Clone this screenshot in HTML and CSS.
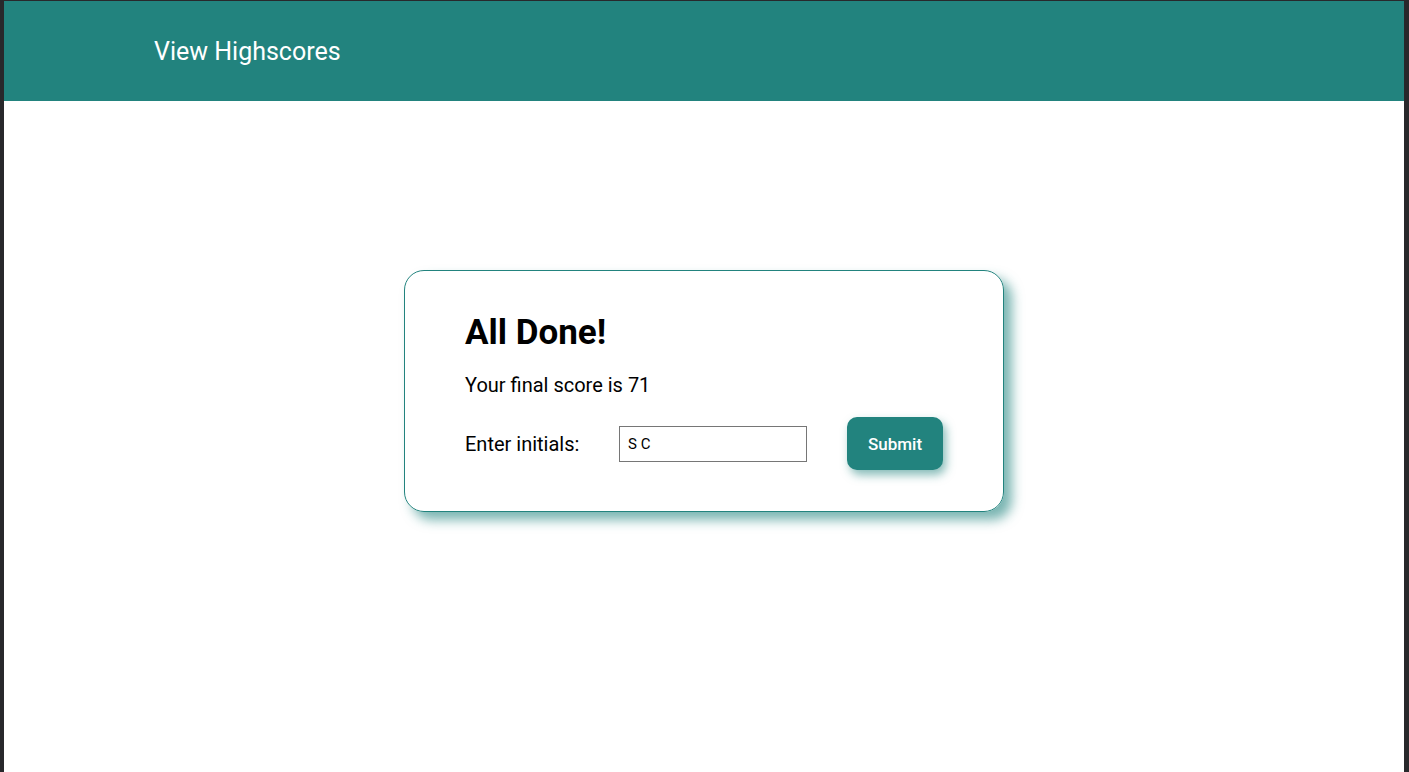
FILE: index.html
```html
<!DOCTYPE html>
<html>
<head>
<meta charset="utf-8">
<link rel="stylesheet" href="styles.css">
</head>
<body>
<div class="frame">
  <header class="topbar">
    <a class="hs-link">View Highscores</a>
  </header>
  <main class="main">
    <section class="card">
      <h1 class="title">All Done!</h1>
      <p class="score">Your final score is 71</p>
      <form class="form">
        <label class="label">Enter initials:</label>
        <input class="input" type="text" value="S C">
        <button class="btn" type="button">Submit</button>
      </form>
    </section>
  </main>
</div>
</body>
</html>
```

FILE: styles.css
```css
html, body {
  margin: 0;
  padding: 0;
  height: 100%;
}
body {
  background: #28282b;
  font-family: Roboto, "Liberation Sans", sans-serif;
}
.frame {
  box-sizing: border-box;
  height: 100%;
  padding: 1px 5px 0 4px;
  display: flex;
  flex-direction: column;
}
.topbar {
  height: 100px;
  background: #22837e;
  display: flex;
  align-items: center;
  padding-left: 150px;
  flex-shrink: 0;
}
.hs-link {
  color: #fff;
  font-size: 25px;
  line-height: 30px;
  margin-top: 1px;
}
.main {
  flex: 1;
  background: #fff;
  display: flex;
  justify-content: center;
  align-items: flex-start;
  padding-top: 169px;
}
.card {
  box-sizing: border-box;
  width: 600px;
  height: 242px;
  border: 1px solid #22837e;
  border-radius: 20px;
  box-shadow: 8px 8px 12px rgba(34, 131, 126, 0.6);
  padding: 39px 60px 0 60px;
}
.title {
  margin: 0;
  font-size: 35px;
  font-weight: 700;
  color: #000;
  line-height: 46px;
}
.score {
  margin: 17px 0 0;
  font-size: 20px;
  line-height: 24px;
  color: #000;
}
.form {
  margin-top: 20px;
  display: flex;
  align-items: center;
}
.label {
  font-size: 20px;
  color: #000;
  width: 154px;
}
.input {
  box-sizing: border-box;
  width: 188px;
  height: 36px;
  border: 1px solid #767676;
  padding: 0 8px;
  font-family: Roboto, "Liberation Sans", sans-serif;
  font-size: 15px;
  color: #000;
}
.btn {
  margin-left: 40px;
  width: 96px;
  height: 53px;
  border: none;
  border-radius: 10px;
  background: #22837e;
  color: #fff;
  font-family: Roboto, "Liberation Sans", sans-serif;
  font-size: 17px;
  font-weight: 500;
  box-shadow: 3px 5px 10px rgba(34, 131, 126, 0.55);
}
```
